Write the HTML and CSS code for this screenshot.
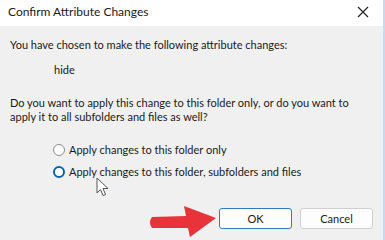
FILE: index.html
```html
<!DOCTYPE html>
<html lang="en">
<head>
  <meta charset="UTF-8">
  <title>Confirm Attribute Changes</title>
  <link rel="stylesheet" href="styles.css">
</head>
<body>
  <div class="dialog">
    <!-- Barra de título -->
    <div class="titlebar">
      <span class="title">Confirm Attribute Changes</span>
      <svg class="close" width="12" height="12" viewBox="0 0 12 12">
        <path d="M1 1 L11 11 M11 1 L1 11" stroke="#222" stroke-width="1.2" fill="none"/>
      </svg>
    </div>

    <div class="content">
      <p class="msg">You have chosen to make the following attribute changes:</p>
      <p class="attr">hide</p>
      <p class="question">Do you want to apply this change to this folder only, or do you want to<br>apply it to all subfolders and files as well?</p>

      <div class="options">
        <label class="option"><span class="radio"></span>Apply changes to this folder only</label>
        <label class="option"><span class="radio checked"></span>Apply changes to this folder, subfolders and files</label>
      </div>

      <div class="buttons">
        <button class="btn default">OK</button>
        <button class="btn">Cancel</button>
      </div>
    </div>

    <!-- cursor do rato -->
    <svg class="cursor" width="14" height="20" viewBox="0 0 14 20">
      <path d="M1 1 L1 16 L4.5 12.5 L7 18.5 L9.5 17.5 L7 11.5 L12 11.5 Z" fill="#fff" stroke="#555" stroke-width="1"/>
    </svg>

    <!-- seta vermelha -->
    <svg class="arrow" width="74" height="42" viewBox="0 0 74 42">
      <path d="M6 19 L40 18 L38 8 L70 20 L44 39 L42 30 L6 30 Q2 24.5 6 19 Z" fill="#e8333a"/>
    </svg>
  </div>
</body>
</html>
```

FILE: styles.css
```css
body {
  margin: 0;
  padding: 0;
  font-family: Lato, "Liberation Sans", sans-serif;
  font-size: 11px;
  color: #1a1a1a;
}

.dialog {
  position: relative;
  width: 385px;
  height: 240px;
  background-color: #f0f0f0;
  border-right: 2px solid #c9daf0;
  box-sizing: border-box;
  overflow: hidden;
}

.titlebar {
  height: 26px;
  background-color: #fff;
  display: flex;
  align-items: center;
  justify-content: space-between;
  padding: 0 14px 3px 8px;
  box-sizing: border-box;
}

.title {
  font-size: 12px;
}

.content {
  padding: 10px 10px 0 10px;
}

p {
  margin: 0;
  line-height: 14px;
  white-space: nowrap;
}

.msg {
  margin-top: 2px;
}

.attr {
  margin: 11px 0 0 44px;
}

.question {
  margin-top: 19px;
}

.options {
  display: flex;
  flex-direction: column;
  gap: 8px;
  margin: 19px 0 0 43px;
}

.option {
  display: flex;
  align-items: center;
  gap: 4px;
  line-height: 14px;
}

.radio {
  width: 10px;
  height: 10px;
  border: 1px solid #8a8a8a;
  border-radius: 50%;
  background: #fff;
}

.radio.checked {
  width: 8px;
  height: 8px;
  border: 2px solid #0063b1;
}

.buttons {
  display: flex;
  justify-content: flex-end;
  gap: 8px;
  margin-top: 29px;
}

.btn {
  width: 73px;
  height: 21px;
  font-family: inherit;
  font-size: 11px;
  color: #1a1a1a;
  background-color: #fdfdfd;
  border: 1px solid #cfcfcf;
  border-radius: 3px;
  padding: 0;
}

.btn.default {
  border-color: #2f78c4;
}

.cursor {
  position: absolute;
  left: 96px;
  top: 177px;
}

.arrow {
  position: absolute;
  left: 146px;
  top: 198px;
}
```
